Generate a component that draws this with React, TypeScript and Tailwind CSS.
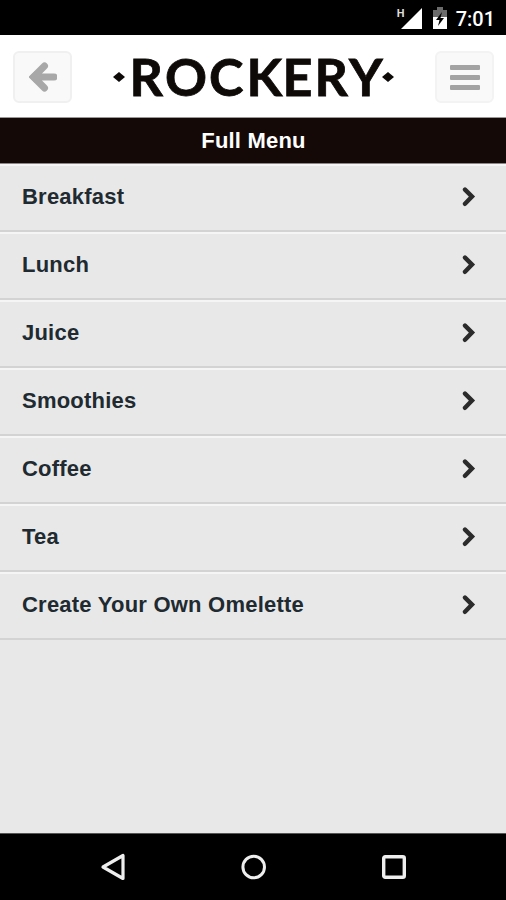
import React from 'react'

interface MenuCategory {
  id: string
  title: string
}

const categories: MenuCategory[] = [
  { id: 'breakfast', title: 'Breakfast' },
  { id: 'lunch', title: 'Lunch' },
  { id: 'juice', title: 'Juice' },
  { id: 'smoothies', title: 'Smoothies' },
  { id: 'coffee', title: 'Coffee' },
  { id: 'tea', title: 'Tea' },
  { id: 'omelette', title: 'Create Your Own Omelette' }
]

const StatusBar: React.FC = () => (
  <div className="flex h-[35px] items-center justify-end bg-black pr-[11px] text-white">
    <span className="mb-[9px] -mr-[1px] text-[11px] leading-none font-bold font-['Roboto',sans-serif] text-[#ddd]">H</span>
    <svg className="-ml-[3px] mt-[1px] h-[21px] w-[21px]" viewBox="0 0 21 21">
      <path d="M21 0V21H0Z" fill="#fff" />
    </svg>
    <svg className="ml-[11px] mt-[1px] h-[22px] w-[14px]" viewBox="0 0 14 22">
      <path d="M4 0H10V3H14V11H0V3H4Z" fill="#6b6b6b" />
      <path d="M0 10H14V22H0Z" fill="#fff" />
      <path d="M9 5L3 13H6.5L5 19L11 11H7.5Z" fill="#000" />
    </svg>
    <span className="ml-[9px] mt-[3px] text-[20px] leading-none font-medium font-['Roboto',sans-serif]">7:01</span>
  </div>
)

const Logo: React.FC = () => (
  <svg className="h-[78px] w-[290px]" viewBox="109 37 290 78">
    <path d="M113 77L119 72L125 77L119 82Z" fill="#0d0a08" />
    <text
      x="129.5 165 209 246.5 282.5 314.5 349"
      y="96"
      className="text-[52px] leading-none font-bold font-['Lato',sans-serif]"
      fill="#0d0a08"
      stroke="#0d0a08"
      strokeWidth="0.8"
    >
      ROCKERY
    </text>
    <path d="M382 77L388 72L394 77L388 82Z" fill="#0d0a08" />
  </svg>
)

const Header: React.FC = () => (
  <header className="flex h-[83px] items-center justify-between border-b border-[#999] bg-white pr-[12px] pl-[13px]">
    <button className="mt-px flex h-[52px] w-[59px] items-center justify-center rounded-[6px] border-2 border-[#f0f0f0] bg-[#f9f9f9]">
      <svg className="h-[30px] w-[28px]" viewBox="0 0 28 30">
        <path
          d="M15.5 4L4.5 15L15.5 26M5 15H25"
          fill="none"
          stroke="#a8a8a8"
          strokeWidth="7"
          strokeLinecap="round"
        />
        <path d="M0 15L6 9V21Z" fill="#a8a8a8" />
      </svg>
    </button>
    <Logo />
    <button className="mt-px flex h-[52px] w-[59px] flex-col items-center justify-center gap-[5px] rounded-[6px] border-2 border-[#f3f3f3] bg-[#f9f9f9] pt-px">
      <span className="h-[5px] w-[30px] rounded-[1px] bg-[#a3a3a3]" />
      <span className="h-[5px] w-[30px] rounded-[1px] bg-[#a3a3a3]" />
      <span className="h-[5px] w-[30px] rounded-[1px] bg-[#a3a3a3]" />
    </button>
  </header>
)

const MenuRow: React.FC<{ category: MenuCategory }> = ({ category }) => (
  <li className="flex h-[68px] items-center justify-between border-t-2 border-b-2 border-t-[#f5f5f5] border-b-[#d3d3d3] pr-[30px] pb-[2px] pl-[22px]">
    <span className="text-[22px] leading-none font-bold tracking-[0.22px] text-[#202a30]">{category.title}</span>
    <svg className="h-[20px] w-[15px]" viewBox="0 0 15 20">
      <path d="M4 2.6L11 9.6L4 16.8" fill="none" stroke="#2b2b2b" strokeWidth="4.4" strokeLinecap="round" />
    </svg>
  </li>
)

const NavBar: React.FC = () => (
  <nav className="flex h-[67px] items-center justify-between border-t border-[#555] bg-black pr-[98px] pl-[99px]">
    <svg className="h-[30px] w-[28px]" viewBox="0 0 28 30">
      <path d="M24 3.5V26.5L4 15Z" fill="none" stroke="#eee" strokeWidth="3.2" strokeLinejoin="round" />
    </svg>
    <svg className="h-[28px] w-[28px]" viewBox="0 0 28 28">
      <circle cx="13.7" cy="14" r="10.8" fill="none" stroke="#eee" strokeWidth="3" />
    </svg>
    <svg className="h-[28px] w-[28px]" viewBox="0 0 28 28">
      <rect x="3.7" y="3.7" width="20.6" height="20.6" rx="1.5" fill="none" stroke="#eee" strokeWidth="3.4" />
    </svg>
  </nav>
)

const App: React.FC = () => {
  return (
    <div className="flex h-[900px] w-[506px] flex-col bg-[#e8e8e8] font-['Liberation_Sans',sans-serif]">
      <StatusBar />
      <Header />
      <div className="flex h-[46px] items-center justify-center border-b border-[#8b8787] bg-[#150907] pl-px">
        <h1 className="text-[22px] leading-none font-bold tracking-[0.2px] text-white">Full Menu</h1>
      </div>
      <ul className="flex-1">
        {categories.map((category) => (
          <MenuRow key={category.id} category={category} />
        ))}
      </ul>
      <NavBar />
    </div>
  )
}

export default App
